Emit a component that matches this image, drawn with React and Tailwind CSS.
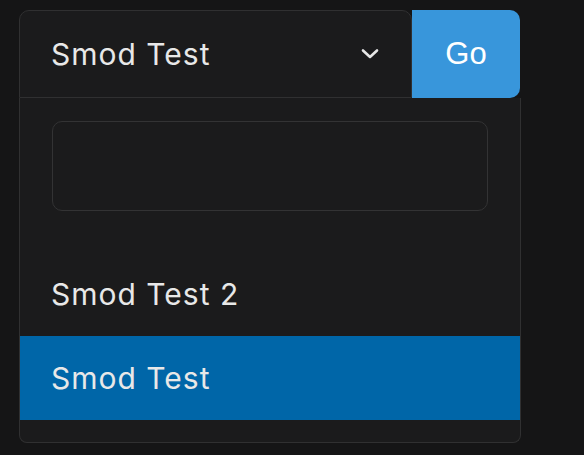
export default function App() {
  return (
    <div className="min-h-[455px] w-[584px] bg-[#151516] pl-[19px] pt-[10px] font-['Inter','Noto_Sans',sans-serif] text-[#e8e8e8]">
      <div className="w-[502px]">
        <div className="flex h-[88px]">
          <div className="flex w-[393px] items-center justify-between rounded-t-[10px] border border-[#303031] bg-[#1b1b1c] pl-[31px] pr-[30px]">
            <span className="text-[30px] leading-none tracking-[1px]">Smod Test</span>
            <svg width="20" height="12" viewBox="0 0 20 12" fill="none" className="mr-[1px]">
              <path d="M3 2.5 L10 9 L17 2.5" stroke="#e6e6e6" strokeWidth="2.6" strokeLinecap="round" strokeLinejoin="round" />
            </svg>
          </div>
          <button className="flex w-[108px] items-center justify-center rounded-r-[10px] bg-[#3896db] font-['Liberation_Sans',Arial,sans-serif] text-[31px] text-white">
            Go
          </button>
        </div>
        <div className="rounded-b-[8px] border-x border-b border-[#303031] bg-[#1b1b1c] pb-[22px] pt-[23px]">
          <div className="mx-[32px] h-[90px] rounded-[10px] border border-[#333334] bg-[#1b1b1c]" />
          <div className="mt-[41px]">
            <div className="flex h-[84px] items-center pl-[31px] text-[30px] leading-none tracking-[1px]">Smod Test 2</div>
            <div className="flex h-[84px] items-center bg-[#0066a8] pl-[31px] text-[30px] leading-none tracking-[1px]">Smod Test</div>
          </div>
        </div>
      </div>
    </div>
  );
}
